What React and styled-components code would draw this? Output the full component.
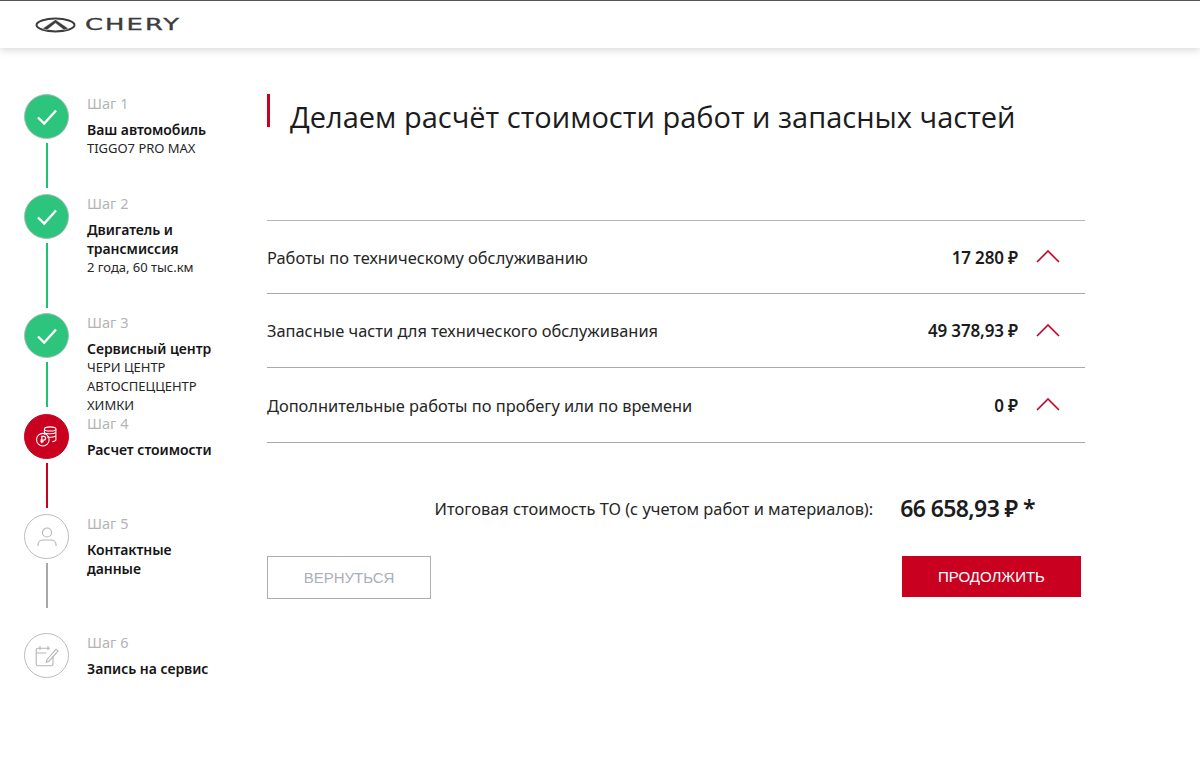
import React from "react";
import styled, { createGlobalStyle } from "styled-components";

const Global = createGlobalStyle`
  html, body { margin: 0; padding: 0; background: #fff; }
  body { font-family: "Noto Sans", "Open Sans", sans-serif; color: #1a1a1a; }
`;
const Page = styled.div`display: flex; flex-direction: column; width: 1200px; height: 760px; overflow: hidden;`;
const Header = styled.header`
  height: 47px; border-top: 1px solid #555; background: #fff; display: flex; align-items: center; gap: 9px;
  padding-left: 35px; box-shadow: 0 2px 8px rgba(0,0,0,.16); flex: none;
`;
const LogoText = styled.span`
  font-family: "DejaVu Sans", sans-serif; font-size: 15px; line-height: 1; color: #3c3c3c; letter-spacing: 1.2px;
  display: inline-block; transform: scaleX(1.72); transform-origin: left center; margin-top: 1px; -webkit-text-stroke: .3px #3c3c3c;
`;
const Body = styled.div`display: flex; flex: 1;`;
const Side = styled.aside`width: 267px; flex: none; padding: 46px 0 0 24px; box-sizing: border-box;`;
const Step = styled.div`display: flex; height: ${p => p.$h}px; gap: 18px;`;
const Track = styled.div`display: flex; flex-direction: column; align-items: center; width: 45px; flex: none;`;
const Circle = styled.div`
  width: 45px; height: 45px; border-radius: 50%; box-sizing: border-box; flex: none; display: flex; align-items: center; justify-content: center;
  background: ${p => p.$state === "done" ? "#2dc47e" : p.$state === "active" ? "#c9001f" : "#fff"};
  border: 1px solid ${p => p.$state === "done" ? "#a9bdb2" : p.$state === "active" ? "#c9001f" : "#bdbdbd"};
`;
const Line = styled.div`
  width: 2px; height: ${p => p.$len}px; margin-top: 4px;
  background: ${p => p.$state === "done" ? "#1fc274" : p.$state === "active" ? "#c9001f" : "#a8a8a8"};
`;
const StepText = styled.div`display: flex; flex-direction: column;`;
const StepNo = styled.div`font-size: 14.5px; line-height: 18px; color: #b4b4b4; margin-bottom: 8px;`;
const StepTitle = styled.div`font-size: 14px; line-height: 19px; font-weight: 600; color: #151515; white-space: pre-line; letter-spacing: -.05px;`;
const StepSub = styled.div`font-size: 13px; line-height: 19px; color: #262626; white-space: pre-line; letter-spacing: -.02px;`;
const Main = styled.main`width: 818px; flex: none; padding-top: 46px;`;
const Heading = styled.div`display: flex; height: 126px; gap: 20px;`;
const Accent = styled.div`width: 3px; height: 33px; background: #c9001f;`;
const Title = styled.h1`margin: 0; padding-top: 5px; font-family: "Open Sans", sans-serif; font-weight: 400; font-size: 29px; line-height: 36px; color: #1c1c1c; white-space: nowrap;`;
const List = styled.div`border-top: 1px solid #b5b5b5;`;
const Row = styled.div`
  height: ${p => p.$h}px; box-sizing: border-box; border-bottom: 1px solid #a9a9a9; display: flex; align-items: center; justify-content: space-between; padding-right: 25px;
`;
const RowLabel = styled.span`font-size: 16.4px; color: #262626;`;
const RowRight = styled.span`display: flex; align-items: center; gap: 18px;`;
const Price = styled.span`font-size: 17px; font-weight: 600; color: #1c1c1c; letter-spacing: -.15px;`;
const Total = styled.div`display: flex; justify-content: flex-end; align-items: center; gap: 27px; height: 66px; margin-top: 33px; padding-right: 50px;`;
const TotalLabel = styled.span`font-size: 16.4px; color: #262626; margin-top: -2px;`;
const TotalPrice = styled.span`font-size: 23px; font-weight: 600; color: #1c1c1c; letter-spacing: -.6px; margin-top: -2px;`;
const Actions = styled.div`display: flex; justify-content: space-between; align-items: flex-start; padding-right: 4px; margin-top: 14px;`;
const BackBtn = styled.button`
  width: 164px; height: 43px; background: #fff; border: 1px solid #adadad; color: #aab0b8; font: 400 15px "Liberation Sans", sans-serif; padding: 0;
`;
const NextBtn = styled.button`
  width: 179px; height: 41px; background: #c9001f; border: 0; color: #fff; font: 400 15px "Liberation Sans", sans-serif; padding: 0;
`;

const Check = () => (
  <svg width="22" height="18" viewBox="0 0 22 18" fill="none"><path d="M2 9.5 8.2 15.5 20 2.5" stroke="#fff" strokeWidth="2.4" /></svg>
);
const Coins = () => (
  <svg width="23" height="23" viewBox="0 0 22 22" fill="none" stroke="#fff" strokeWidth="1">
    <ellipse cx="14.5" cy="3.8" rx="5.5" ry="2" />
    <path d="M9 3.8V9M20 3.8V14.2c0 .9-1.6 1.6-3.5 1.8M9 7.2c1 1 3 1.3 5.5 1.2 2.5 0 4.5-.5 5.5-1.4M11.5 11.5c1 .2 5.5.4 8.5-1" />
    <circle cx="7.5" cy="14" r="6" />
    <path d="M6.5 17.5V10.8h1.8a1.7 1.7 0 0 1 0 3.6H5.2M5.2 16h3" strokeWidth="1.2" />
  </svg>
);
const User = () => (
  <svg width="20" height="22" viewBox="0 0 20 22" fill="none" stroke="#b5b5b5" strokeWidth="1.1">
    <circle cx="10" cy="6.5" r="4.5" />
    <path d="M1 20v-1.5C1 15.5 3.5 14 6 14h8c2.5 0 5 1.5 5 4.5V20" />
  </svg>
);
const CalendarEdit = () => (
  <svg width="24" height="22" viewBox="0 0 24 22" fill="none" stroke="#b5b5b5" strokeWidth="1.1">
    <path d="M18 11v8a1.8 1.8 0 0 1-1.8 1.8H3A1.8 1.8 0 0 1 1.2 19V5A1.8 1.8 0 0 1 3 3.2h12M1.2 8h10M5 1v4M13 1v4" />
    <path d="M12 14.5 21 4.2l2 1.8-9 10.2-2.6.9z" />
  </svg>
);
const Chevron = () => (
  <svg width="24" height="14" viewBox="0 0 24 14" fill="none"><path d="M1 12 12 1l11 11" stroke="#c9001f" strokeWidth="1.6" /></svg>
);
const Logo = () => (
  <svg width="41" height="16" viewBox="0 0 41 16" fill="none">
    <ellipse cx="20.5" cy="8" rx="19" ry="6.4" stroke="#3c3c3c" strokeWidth="2" />
    <path d="M7.5 11.5 20.5 2.6 33.5 11.5 29 13 20.5 6.2 12 13z" fill="#3c3c3c" stroke="#fff" strokeWidth=".5" />
  </svg>
);

const steps = [
  { no: "Шаг 1", title: "Ваш автомобиль", sub: "TIGGO7 PRO MAX", state: "done", h: 100, len: 45, icon: <Check /> },
  { no: "Шаг 2", title: "Двигатель и\nтрансмиссия", sub: "2 года, 60 тыс.км", state: "done", h: 119, len: 65, icon: <Check /> },
  { no: "Шаг 3", title: "Сервисный центр", sub: "ЧЕРИ ЦЕНТР\nАВТОСПЕЦЦЕНТР\nХИМКИ", state: "done", h: 101, len: 45, icon: <Check /> },
  { no: "Шаг 4", title: "Расчет стоимости", state: "active", h: 100, len: 45, icon: <Coins /> },
  { no: "Шаг 5", title: "Контактные\nданные", state: "idle", h: 119, len: 45, icon: <User /> },
  { no: "Шаг 6", title: "Запись на сервис", state: "idle", h: 60, icon: <CalendarEdit /> },
];
const rows = [
  { label: "Работы по техническому обслуживанию", price: "17 280 ₽", h: 73 },
  { label: "Запасные части для технического обслуживания", price: "49 378,93 ₽", h: 74 },
  { label: "Дополнительные работы по пробегу или по времени", price: "0 ₽", h: 75 },
];

export default function App() {
  return (
    <Page>
      <Global />
      <Header>
        <Logo />
        <LogoText>CHERY</LogoText>
      </Header>
      <Body>
        <Side>
          {steps.map(s => (
            <Step key={s.no} $h={s.h}>
              <Track>
                <Circle $state={s.state}>{s.icon}</Circle>
                {s.len && <Line $state={s.state} $len={s.len} />}
              </Track>
              <StepText>
                <StepNo>{s.no}</StepNo>
                <StepTitle>{s.title}</StepTitle>
                {s.sub && <StepSub>{s.sub}</StepSub>}
              </StepText>
            </Step>
          ))}
        </Side>
        <Main>
          <Heading>
            <Accent />
            <Title>Делаем расчёт стоимости работ и запасных частей</Title>
          </Heading>
          <List>
            {rows.map(r => (
              <Row key={r.label} $h={r.h}>
                <RowLabel>{r.label}</RowLabel>
                <RowRight><Price>{r.price}</Price><Chevron /></RowRight>
              </Row>
            ))}
          </List>
          <Total>
            <TotalLabel>Итоговая стоимость ТО (с учетом работ и материалов):</TotalLabel>
            <TotalPrice>66 658,93 ₽ *</TotalPrice>
          </Total>
          <Actions>
            <BackBtn>ВЕРНУТЬСЯ</BackBtn>
            <NextBtn>ПРОДОЛЖИТЬ</NextBtn>
          </Actions>
        </Main>
      </Body>
    </Page>
  );
}
